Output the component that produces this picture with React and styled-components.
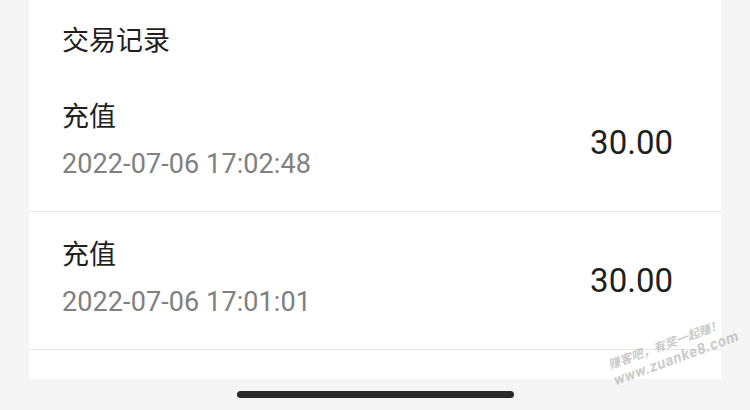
import React from "react";
import styled, { createGlobalStyle } from "styled-components";

const GlobalStyle = createGlobalStyle`
  html, body {
    margin: 0;
    padding: 0;
    background: #f5f5f5;
  }
  body {
    font-family: Roboto, "Noto Sans CJK SC", sans-serif;
  }
`;

const Page = styled.div`
  position: relative;
  width: 750px;
  height: 410px;
  overflow: hidden;
  background: #f5f5f5;
  display: flex;
  flex-direction: column;
  align-items: center;
`;

const Card = styled.div`
  width: 692px;
  height: 379px;
  flex: none;
  overflow: hidden;
  background: #ffffff;
  display: flex;
  flex-direction: column;
`;

const Header = styled.div`
  flex: none;
  height: 74px;
  padding: 24px 0 0 33px;
  box-sizing: border-box;
  font-size: 27px;
  line-height: 34px;
  color: #1f1f1f;
`;

const Row = styled.div`
  flex: none;
  height: 138px;
  box-sizing: border-box;
  padding: 0 48px 0 33px;
  display: flex;
  align-items: center;
  justify-content: space-between;
  border-bottom: 1px solid #e6e6e6;
`;

const Info = styled.div`
  display: flex;
  flex-direction: column;
  gap: 14px;
  padding-bottom: 8px;
`;

const Name = styled.div`
  font-size: 27px;
  line-height: 36px;
  color: #1f1f1f;
`;

const Time = styled.div`
  font-size: 27px;
  line-height: 30px;
  color: #808080;
  letter-spacing: 0.1px;
`;

const Amount = styled.div`
  font-size: 33px;
  line-height: 40px;
  color: #1f1f1f;
`;

const HomeBar = styled.div`
  width: 277px;
  height: 7px;
  margin-top: 12px;
  border-radius: 4px;
  background: #2a2a2a;
`;

const Watermark = styled.div`
  position: absolute;
  left: 606px;
  top: 358px;
  transform: rotate(-20deg);
  transform-origin: left top;
  color: rgba(150, 150, 150, 0.5);
  font-weight: bold;
  font-size: 12px;
  line-height: 16px;
  font-style: italic;
  white-space: nowrap;
  pointer-events: none;
  div + div {
    font-size: 15px;
    letter-spacing: 0.6px;
  }
`;

const records = [
  { name: "充值", time: "2022-07-06 17:02:48", amount: "30.00" },
  { name: "充值", time: "2022-07-06 17:01:01", amount: "30.00" },
];

export default function App() {
  return (
    <Page>
      <GlobalStyle />
      <Card>
        <Header>交易记录</Header>
        {records.map((r, i) => (
          <Row key={i}>
            <Info>
              <Name>{r.name}</Name>
              <Time>{r.time}</Time>
            </Info>
            <Amount>{r.amount}</Amount>
          </Row>
        ))}
        <Row />
      </Card>
      <HomeBar />
      <Watermark>
        <div>赚客吧，有奖一起赚！</div>
        <div>www.zuanke8.com</div>
      </Watermark>
    </Page>
  );
}
